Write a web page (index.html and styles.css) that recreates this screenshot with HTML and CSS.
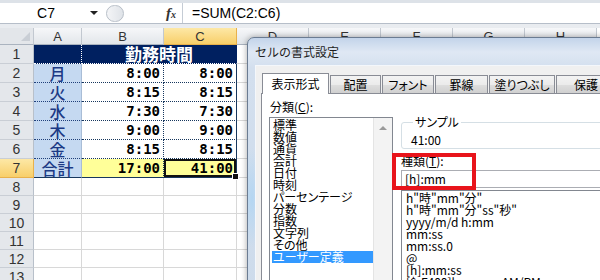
FILE: index.html
```html
<!DOCTYPE html>
<html lang="ja">
<head>
    <meta charset="UTF-8">
    <title>セルの書式設定</title>
    <link rel="stylesheet" href="styles.css">
</head>
<body>

<div class="excel">
    <!-- 数式バー -->
    <div class="formula-bar">
        <div class="name-box"><span class="name">C7</span><span class="drop"></span></div>
        <div class="fx-box"><span class="grip"></span><span class="fx">f<small>x</small></span></div>
        <div class="formula">=SUM(C2:C6)</div>
    </div>
    <div class="bar-gap"></div>

    <!-- シート -->
    <div class="sheet">
        <div class="corner"></div>
        <div class="col-h">A</div>
        <div class="col-h">B</div>
        <div class="col-h sel">C</div>
        <div class="col-h">D</div>
        <div class="col-h">E</div>
        <div class="col-h">F</div>
        <div class="col-h">G</div>
        <div class="col-h">H</div>

        <div class="row-h">1</div>
        <div class="navy"></div>
        <div class="navy title">勤務時間</div>
        <div></div>

        <div class="row-h">2</div>
        <div class="day">月</div>
        <div class="time b">8:00</div>
        <div class="time c">8:00</div>
        <div></div>

        <div class="row-h">3</div>
        <div class="day">火</div>
        <div class="time b">8:15</div>
        <div class="time c">8:15</div>
        <div></div>

        <div class="row-h">4</div>
        <div class="day">水</div>
        <div class="time b">7:30</div>
        <div class="time c">7:30</div>
        <div></div>

        <div class="row-h">5</div>
        <div class="day">木</div>
        <div class="time b">9:00</div>
        <div class="time c">9:00</div>
        <div></div>

        <div class="row-h">6</div>
        <div class="day">金</div>
        <div class="time b">8:15</div>
        <div class="time c">8:15</div>
        <div></div>

        <div class="row-h sel">7</div>
        <div class="day total">合計</div>
        <div class="time b total">17:00</div>
        <div class="time c total cur">41:00<span class="handle"></span></div>
        <div></div>

        <div class="row-h">8</div><div></div><div></div><div></div><div></div>
        <div class="row-h">9</div><div></div><div></div><div></div><div></div>
        <div class="row-h">10</div><div></div><div></div><div></div><div></div>
        <div class="row-h">11</div><div></div><div></div><div></div><div></div>
        <div class="row-h">12</div><div></div><div></div><div></div><div></div>
        <div class="row-h">13</div><div></div><div></div><div></div><div></div>
    </div>

    <!-- ダイアログ -->
    <div class="dialog">
        <div class="dlg-title">セルの書式設定</div>
        <div class="client">
            <div class="tabstrip">
                <div class="tab on">表示形式</div>
                <div class="tab w51">配置</div>
                <div class="tab w52">フォント</div>
                <div class="tab w53">罫線</div>
                <div class="tab w66">塗りつぶし</div>
                <div class="tab w60">保護</div>
            </div>
            <div class="tabpanel">
                <div class="left-col">
                    <div class="label">分類(<u>C</u>):</div>
                    <div class="listbox">
                        <div class="items">
                            <div>標準</div>
                            <div>数値</div>
                            <div>通貨</div>
                            <div>会計</div>
                            <div>日付</div>
                            <div>時刻</div>
                            <div>パーセンテージ</div>
                            <div>分数</div>
                            <div>指数</div>
                            <div>文字列</div>
                            <div>その他</div>
                            <div class="hl">ユーザー定義</div>
                        </div>
                        <div class="scroll"><span class="up"></span></div>
                    </div>
                </div>
                <div class="right-col">
                    <fieldset class="sample">
                        <legend>サンプル</legend>
                        <div class="sample-val">41:00</div>
                    </fieldset>
                    <div class="label kind">種類(<u>T</u>):</div>
                    <div class="input">[h]:mm</div>
                    <div class="formats">
                        <div>h"時"mm"分"</div>
                        <div>h"時"mm"分"ss"秒"</div>
                        <div>yyyy/m/d h:mm</div>
                        <div>mm:ss</div>
                        <div>mm:ss.0</div>
                        <div>@</div>
                        <div>[h]:mm:ss</div>
                        <div>[$-F400]h:mm:ss AM/PM</div>
                    </div>
                </div>
            </div>
        </div>
        <!-- 赤枠の強調 -->
        <div class="mark"></div>
    </div>
</div>

</body>
</html>
```

FILE: styles.css
```css
/* 全体 */
html, body {
    margin: 0;
    padding: 0;
    overflow: hidden;
    background-color: #fff;
}

.excel {
    position: relative;
    width: 600px;
    height: 280px;
    overflow: hidden;
    font-family: "Liberation Sans", Arial, sans-serif;
}

/* 数式バー */
.formula-bar {
    display: flex;
    height: 20px;
    padding-top: 3px;
    background-color: #dde2e8;
}

.name-box {
    display: flex;
    align-items: center;
    width: 102px;
    background-color: #fff;
    font-size: 14px;
}

.name-box .name {
    flex: 1;
    text-align: center;
    padding-left: 2px;
}

.name-box .drop {
    width: 0;
    height: 0;
    margin-right: 4px;
    border-left: 4px solid transparent;
    border-right: 4px solid transparent;
    border-top: 4px solid #222;
}

.fx-box {
    display: flex;
    align-items: center;
    width: 80px;
    background-color: #fff;
}

.grip {
    width: 18px;
    height: 17px;
    margin-left: 4px;
    border: 1px solid #b8bfc8;
    border-radius: 10px;
    background: linear-gradient(90deg, #f4f5f7, #dfe3e8);
    box-sizing: border-box;
}

.fx {
    margin-left: 42px;
    font-family: "Liberation Serif", serif;
    font-style: italic;
    font-weight: bold;
    font-size: 15px;
    color: #333;
}

.fx small {
    font-size: 10px;
}

.formula {
    flex: 1;
    border-left: 1px solid #c5ccd5;
    padding-left: 9px;
    background-color: #fff;
    font-size: 14px;
    line-height: 20px;
}

.bar-gap {
    height: 4px;
    border-top: 1px solid #b6bec9;
    background-color: #e9ecf0;
}

/* シート */
.sheet {
    display: grid;
    grid-template-columns: 34px 48px 82px 73px repeat(5, 72px);
    grid-template-rows: 17px repeat(7, 19px) repeat(6, 18px);
}

.sheet > div {
    box-sizing: border-box;
    border-right: 1px solid #d8d8d8;
    border-bottom: 1px solid #d8d8d8;
}

.sheet > .corner {
    background-color: #e3e6ea;
    border-right: 1px solid #c2c8d0;
    border-bottom: 1px solid #aab3bf;
    position: relative;
}

.corner::after {
    content: "";
    position: absolute;
    right: 3px;
    bottom: 3px;
    border-left: 9px solid transparent;
    border-bottom: 9px solid #c9ced5;
}

.sheet > .col-h {
    background: linear-gradient(#f6f7f9, #e2e6ea);
    border-right: 1px solid #c2c8d0;
    border-bottom: 1px solid #aab3bf;
    text-align: center;
    font-size: 13px;
    line-height: 17px;
    color: #333;
}

.sheet > .row-h {
    grid-column: 1;
    background-color: #e4e7eb;
    border-right: 1px solid #b8c0ca;
    border-bottom: 1px solid #c9ced5;
    text-align: center;
    font-size: 14px;
    line-height: 18px;
    color: #333;
}

.sheet > .sel {
    background: linear-gradient(#fde8a6, #f8cf6a);
    border-right: 1px solid #e8b14c;
    border-bottom: 1px solid #e8b14c;
}

/* 表の部分 */
.sheet > .navy {
    background-color: #002060;
    border-bottom: 1px dotted #fff;
    border-right: 1px dotted #fff;
}

.sheet > .title {
    grid-column: span 2;
    border-right: 1px solid #002060;
    color: #fff;
    font-family: "Noto Sans CJK JP", sans-serif;
    font-weight: bold;
    font-size: 17px;
    line-height: 18px;
    text-align: center;
}

.sheet > .day {
    background-color: #c5d9f1;
    border-right: 1px solid #a9bdd6;
    border-bottom: 1px dotted #1f3f7a;
    color: #1c3a85;
    font-family: "Noto Sans CJK JP", sans-serif;
    font-weight: 500;
    font-size: 16px;
    line-height: 18px;
    text-align: center;
}

.sheet > .time {
    border-bottom: 1px dotted #17375e;
    font-family: "DejaVu Sans Mono", monospace;
    font-weight: bold;
    font-size: 14px;
    line-height: 18px;
    text-align: right;
    padding-right: 3px;
    color: #000;
}

.sheet > .time.b {
    border-right: 1px dotted #17375e;
}

.sheet > .time.c {
    border-right: 1px solid #17375e;
}

.sheet > .total {
    border-bottom: 1px solid #17375e;
}

.sheet > .time.total {
    background-color: #ffff99;
}

.sheet > .cur {
    position: relative;
    box-shadow: inset 0 0 0 2px #111;
}

.handle {
    position: absolute;
    right: -3px;
    bottom: -3px;
    width: 5px;
    height: 5px;
    background-color: #111;
    border: 1px solid #fff;
}

/* ダイアログ */
.dialog {
    position: absolute;
    left: 247px;
    top: 37px;
    width: 380px;
    height: 270px;
    box-sizing: border-box;
    padding-left: 7px;
    border: 1px solid #6b7c92;
    border-radius: 7px 0 0 0;
    background:
        radial-gradient(ellipse 10px 50px at 4px 160px, #b4d6f2, transparent),
        linear-gradient(180deg, #c3d4ea 0, #dfe8f4 14px, #d3dfee 30px, #cddbeb 100%);
    box-shadow: 0 0 6px rgba(0, 0, 0, 0.35);
    font-family: "Noto Sans CJK JP", "Noto Sans", sans-serif;
    font-feature-settings: "palt";
    font-size: 12px;
    color: #000;
}

.dlg-title {
    height: 27px;
    line-height: 28px;
    font-size: 12px;
    font-feature-settings: normal;
    color: #1e1e1e;
}

.client {
    height: 100%;
    padding: 7px 0 0 5px;
    border-top: 1px solid #f4f7fb;
    border-left: 1px solid #f4f7fb;
    background-color: #f0f0f0;
}

.tabstrip {
    display: flex;
    align-items: flex-end;
    height: 20px;
    padding-left: 1px;
}

.tab {
    box-sizing: border-box;
    height: 18px;
    margin-left: 1px;
    border: 1px solid #898c95;
    border-bottom: none;
    background: linear-gradient(#f3f3f3, #ebebeb 50%, #dedede 51%, #d0d0d0);
    text-align: center;
    line-height: 18px;
}

.tab.on {
    width: 67px;
    height: 21px;
    margin-left: 0;
    margin-bottom: -1px;
    position: relative;
    z-index: 1;
    background: #fff;
    line-height: 20px;
    font-feature-settings: normal;
}

.w51 { width: 51px; }
.w52 { width: 52px; }
.w53 { width: 53px; }
.w66 { width: 66px; }
.w60 { width: 60px; }

.tabpanel {
    display: flex;
    gap: 8px;
    height: 200px;
    padding: 7px 0 0 7px;
    border: 1px solid #898c95;
    background-color: #fff;
}

.label {
    padding-left: 1px;
    line-height: 12px;
    height: 12px;
}

.left-col {
    width: 124px;
    flex-shrink: 0;
}

.listbox {
    display: flex;
    height: 170px;
    margin-top: 4px;
    border: 1px solid #828790;
}

.items {
    flex: 1;
    padding: 1px 0 0 2px;
}

.items div,
.formats div {
    height: 12px;
    line-height: 12px;
    padding-left: 1px;
    white-space: nowrap;
}

.items .hl {
    background-color: #3399ff;
    color: #fff;
}

.scroll {
    width: 18px;
    background-color: #f3f3f3;
    border-left: 1px solid #e4e4e4;
    display: flex;
    justify-content: center;
}

.up {
    margin-top: 8px;
    width: 0;
    height: 0;
    border-left: 4px solid transparent;
    border-right: 4px solid transparent;
    border-bottom: 4px solid #9a9a9a;
}

.right-col {
    flex: 1;
    padding-top: 15px;
}

.sample {
    margin: 0;
    padding: 6px 8px 2px;
    border: 1px solid #d5dfe5;
    border-radius: 3px;
}

.sample legend {
    margin-left: 3px;
    padding: 0 2px;
    line-height: 12px;
}

.sample-val {
    line-height: 12px;
    height: 12px;
    padding-left: 1px;
}

.label.kind {
    margin-top: 6px;
    padding-left: 0;
}

.input {
    height: 18px;
    box-sizing: border-box;
    margin-top: 3px;
    padding-left: 3px;
    border: 1px solid #abadb3;
    line-height: 16px;
}

.formats {
    height: 100px;
    margin-top: 2px;
    padding: 1px 0 0 3px;
    border: 1px solid #828790;
}

/* 赤枠 */
.mark {
    position: absolute;
    left: 144px;
    top: 115px;
    width: 84px;
    height: 37px;
    box-sizing: border-box;
    border: 4px solid #e8141b;
}
```
